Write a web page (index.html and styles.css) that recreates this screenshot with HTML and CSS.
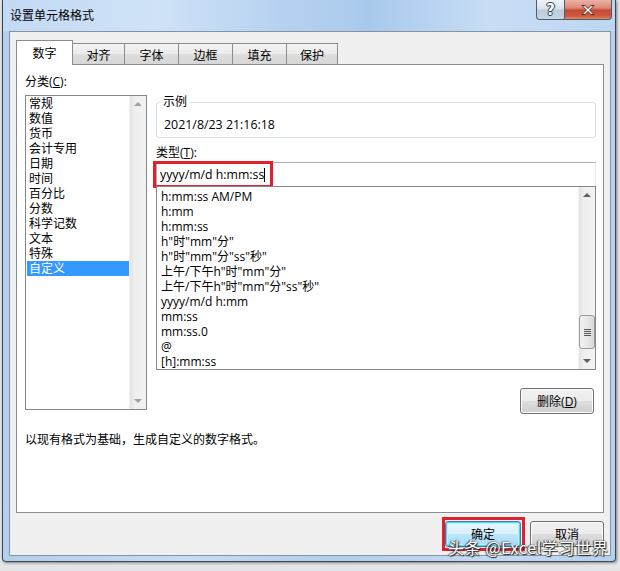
FILE: index.html
```html
<!DOCTYPE html>
<html lang="zh-CN">
<head>
<meta charset="utf-8">
<title>设置单元格格式</title>
<link rel="stylesheet" href="styles.css">
</head>
<body>
<div class="window">
  <div class="titlebar">
    <span class="title">设置单元格格式</span>
    <div class="caption-btns">
      <div class="cbtn help">?</div>
      <div class="cbtn close">
        <svg width="16" height="12" viewBox="0 0 16 12"><path d="M2 1.5h3.2L8 4.6 10.8 1.5H14L9.6 6l4.4 4.5h-3.2L8 7.4 5.2 10.5H2L6.4 6z" fill="#fff" stroke="#5b2a22" stroke-width="1" stroke-linejoin="round"/></svg>
      </div>
    </div>
  </div>
  <div class="client">
    <div class="tabs">
      <div class="tab active">数字</div>
      <div class="tab w53">对齐</div>
      <div class="tab">字体</div>
      <div class="tab">边框</div>
      <div class="tab">填充</div>
      <div class="tab w52">保护</div>
    </div>
    <div class="panel">
      <div class="panel-grid">
        <div class="left">
          <div class="label">分类(<u>C</u>):</div>
          <div class="listbox cat">
            <ul class="items">
              <li>常规</li>
              <li>数值</li>
              <li>货币</li>
              <li>会计专用</li>
              <li>日期</li>
              <li>时间</li>
              <li>百分比</li>
              <li>分数</li>
              <li>科学记数</li>
              <li>文本</li>
              <li>特殊</li>
              <li class="sel">自定义</li>
            </ul>
            <div class="vscroll">
              <div class="arrow up"></div>
              <div class="track"></div>
              <div class="arrow down"></div>
            </div>
          </div>
        </div>
        <div class="right">
          <div class="group">
            <span class="legend">示例</span>
            <div class="sample">2021/8/23 21:16:18</div>
          </div>
          <div class="label type-label">类型(<u>T</u>):</div>
          <div class="type-input">
            <span class="type-text">yyyy/m/d h:mm:ss</span><span class="caret"></span>
            <div class="hl-red input-hl"></div>
          </div>
          <div class="listbox fmt">
            <ul class="items">
              <li>h:mm:ss AM/PM</li>
              <li>h:mm</li>
              <li>h:mm:ss</li>
              <li>h"时"mm"分"</li>
              <li>h"时"mm"分"ss"秒"</li>
              <li>上午/下午h"时"mm"分"</li>
              <li>上午/下午h"时"mm"分"ss"秒"</li>
              <li>yyyy/m/d h:mm</li>
              <li>mm:ss</li>
              <li>mm:ss.0</li>
              <li>@</li>
              <li>[h]:mm:ss</li>
            </ul>
            <div class="vscroll">
              <div class="arrow up"></div>
              <div class="track"><div class="thumb"><span></span><span></span><span></span><span></span></div></div>
              <div class="arrow down"></div>
            </div>
          </div>
          <div class="del-row"><button class="btn del">删除(<u>D</u>)</button></div>
        </div>
      </div>
      <div class="desc">以现有格式为基础，生成自定义的数字格式。</div>
    </div>
    <div class="footer">
      <div class="ok-wrap">
        <button class="btn ok">确定</button>
        <div class="hl-red ok-hl"></div>
      </div>
      <button class="btn cancel">取消</button>
    </div>
  </div>
  <div class="watermark">头条 @Excel学习世界</div>
</div>
</body>
</html>
```
FILE: styles.css
```css
* { box-sizing: border-box; }
html, body { margin: 0; padding: 0; }
body {
  width: 620px;
  height: 571px;
  overflow: hidden;
  background: #e4e5e7;
  font-family: "Open Sans", "Noto Sans CJK SC", sans-serif;
  font-size: 12px;
  color: #000;
}
u { text-decoration: underline; text-underline-offset: 1px; }

.window {
  position: relative;
  margin-left: 2px;
  width: 614px;
  height: 562px;
  border: 1px solid #3d4752;
  border-top: none;
  border-radius: 0 0 4px 4px;
  background: linear-gradient(90deg, #b4d0ef 0%, #c6dcf3 30%, #b2cfee 55%, #c3daf3 80%, #b6d1ef 100%);
  display: flex;
  flex-direction: column;
  box-shadow: 1px 1px 3px rgba(0,0,0,0.45);
}

.titlebar {
  height: 31px;
  display: flex;
  justify-content: space-between;
  align-items: flex-start;
  padding: 0 3px 0 7px;
  background: linear-gradient(90deg, #c3daf4 0%, #cfe2f7 25%, #b7d2f0 45%, #a9c9ec 60%, #c8def5 80%, #bcd6f1 100%);
}
.title {
  line-height: 30px;
  font-size: 12px;
  font-family: "Noto Sans CJK SC", sans-serif;
  color: #000;
}
.caption-btns { display: flex; }
.cbtn {
  height: 20px;
  display: flex;
  align-items: center;
  justify-content: center;
  border: 1px solid #4f5c6c;
  border-top: none;
}
.help {
  width: 28px;
  border-right: none;
  border-radius: 0 0 0 4px;
  background: linear-gradient(180deg, #eef3f8 0%, #d9e3ee 45%, #bccbdb 55%, #c9d6e4 100%);
  color: #fff;
  font-family: "DejaVu Sans", sans-serif;
  font-weight: bold;
  font-size: 15px;
  text-shadow: 0 0 1px #2c3e55, 1px 0 0 #2c3e55, -1px 0 0 #2c3e55, 0 1px 0 #2c3e55, 0 -1px 0 #2c3e55;
}
.close {
  width: 48px;
  border-radius: 0 0 4px 0;
  background: linear-gradient(180deg, #eab3a6 0%, #dd8a78 40%, #c64a33 55%, #cf5a3f 85%, #e08a6e 100%);
}

.client {
  margin: 0 4px 0 6px;
  height: 525px;
  border: 1px solid #8592a3;
  background: #f0f0f0;
  padding: 8px 6px 0 6px;
  display: flex;
  flex-direction: column;
}

.tabs {
  display: flex;
  align-items: flex-end;
  height: 24px;
  position: relative;
  z-index: 2;
}
.tab {
  width: 55px;
  height: 21px;
  border: 1px solid #898c95;
  border-bottom: none;
  margin-left: -1px;
  background: linear-gradient(180deg, #f3f3f3 0%, #ebebeb 50%, #dedede 51%, #d6d6d6 100%);
  display: flex;
  align-items: center;
  justify-content: center;
  padding-top: 1px;
}
.tab.w53 { width: 53px; }
.tab.w52 { width: 52px; }
.tab.active {
  margin-left: 0;
  width: 57px;
  height: 25px;
  margin-bottom: -1px;
  background: #fff;
  z-index: 3;
  padding-top: 0;
  padding-bottom: 1px;
}

.panel {
  height: 449px;
  border: 1px solid #898c95;
  background: #fff;
  padding: 8px 7px 0 8px;
}
.panel-grid {
  display: grid;
  grid-template-columns: 122px 440px;
  column-gap: 9px;
}
.label { line-height: 17px; height: 17px; }
.left .label { margin-bottom: 5px; }

.listbox {
  position: relative;
  border: 1px solid #828790;
  background: #fff;
  display: flex;
}
.items {
  list-style: none;
  margin: 0;
  flex: 1;
  min-width: 0;
}
.items li {
  line-height: 15px;
  height: 15px;
  white-space: nowrap;
}
.cat { height: 315px; }
.cat .items { padding: 0 0 0 1px; }
.cat .items li { padding-left: 2px; }
.cat .items li.sel { background: #3399ff; color: #fff; }

.vscroll {
  width: 17px;
  display: flex;
  flex-direction: column;
  background: linear-gradient(90deg, #e3e3e3 0%, #efefef 30%, #f2f2f2 100%);
  border-left: 1px solid #f2f2f2;
}
.arrow {
  height: 17px;
  position: relative;
}
.arrow::after {
  content: "";
  position: absolute;
  left: 4px;
  top: 6px;
  border-left: 4px solid transparent;
  border-right: 4px solid transparent;
}
.arrow.up::after { border-bottom: 4px solid #606060; }
.arrow.down::after { border-top: 4px solid #606060; top: 7px; }
.cat .arrow::after { opacity: 0.55; }
.track { flex: 1; position: relative; }

.right { padding-top: 29px; }
.group {
  position: relative;
  height: 36px;
  border: 1px solid #d5dfe5;
  border-radius: 3px;
  padding: 14px 0 0 7px;
}
.legend {
  position: absolute;
  left: 4px;
  top: -9px;
  line-height: 16px;
  padding: 0 2px;
  background: #fff;
}
.sample { line-height: 15px; font-size: 12.4px; }
.type-label { margin-top: 6px; margin-bottom: 1px; }

.type-input {
  position: relative;
  height: 24px;
  border: 1px solid #abadb3;
  border-bottom: none;
  border-right-color: #e3e9ef;
  padding: 0 0 0 3px;
  display: flex;
  align-items: center;
}
.type-text { line-height: 15px; font-size: 12.3px; }
.caret {
  display: inline-block;
  width: 1px;
  height: 14px;
  background: #000;
  margin-left: 0;
}
.hl-red {
  position: absolute;
  border: 3px solid #e2202c;
  pointer-events: none;
}
.input-hl { left: -4px; top: -2px; width: 120px; height: 27px; }

.fmt { height: 184px; }
.fmt .items { padding: 2px 0 0 4px; }
.thumb {
  position: absolute;
  left: 0;
  right: 0;
  top: 111px;
  height: 34px;
  border: 1px solid #9a9a9a;
  border-radius: 3px;
  background: linear-gradient(90deg, #f3f3f3 0%, #e9e9e9 50%, #d9d9d9 100%);
  display: flex;
  flex-direction: column;
  align-items: center;
  justify-content: center;
  gap: 1px;
}
.thumb span {
  display: block;
  width: 7px;
  height: 1px;
  background: #555;
}

.del-row {
  margin-top: 18px;
  display: flex;
  justify-content: flex-end;
  padding-right: 2px;
}

.btn {
  font: inherit;
  color: #000;
  height: 26px;
  border: 1px solid #707070;
  border-radius: 3px;
  background: linear-gradient(180deg, #f2f2f2 0%, #ebebeb 48%, #dddddd 52%, #cfcfcf 100%);
  box-shadow: inset 0 0 0 1px #fcfcfc;
  padding: 0;
  display: flex;
  align-items: center;
  justify-content: center;
}
.del { width: 74px; }

.desc {
  margin-top: 17px;
  line-height: 17px;
}

.footer {
  margin-top: 8px;
  display: flex;
  justify-content: flex-end;
  gap: 9px;
}
.ok-wrap { position: relative; }
.ok {
  width: 76px;
  border-color: #3c7fb1;
  box-shadow: inset 0 0 0 1px #48d8fb, inset 0 0 0 2px #c6effc;
  background: linear-gradient(180deg, #eaf6fd 0%, #d9f0fc 48%, #bee6fd 52%, #a7d9f5 100%);
}
.ok-hl { left: -3px; top: -4px; width: 83px; height: 34px; }
.cancel { width: 74px; }

.watermark {
  position: absolute;
  left: 445px;
  top: 536px;
  font-family: "Noto Sans CJK SC", sans-serif;
  font-size: 16px;
  line-height: 22px;
  color: #fff;
  letter-spacing: 0.6px;
  text-shadow: 1px 1px 1px #222, 0 0 2px #333, -1px 0 1px #555;
  white-space: nowrap;
}
```
